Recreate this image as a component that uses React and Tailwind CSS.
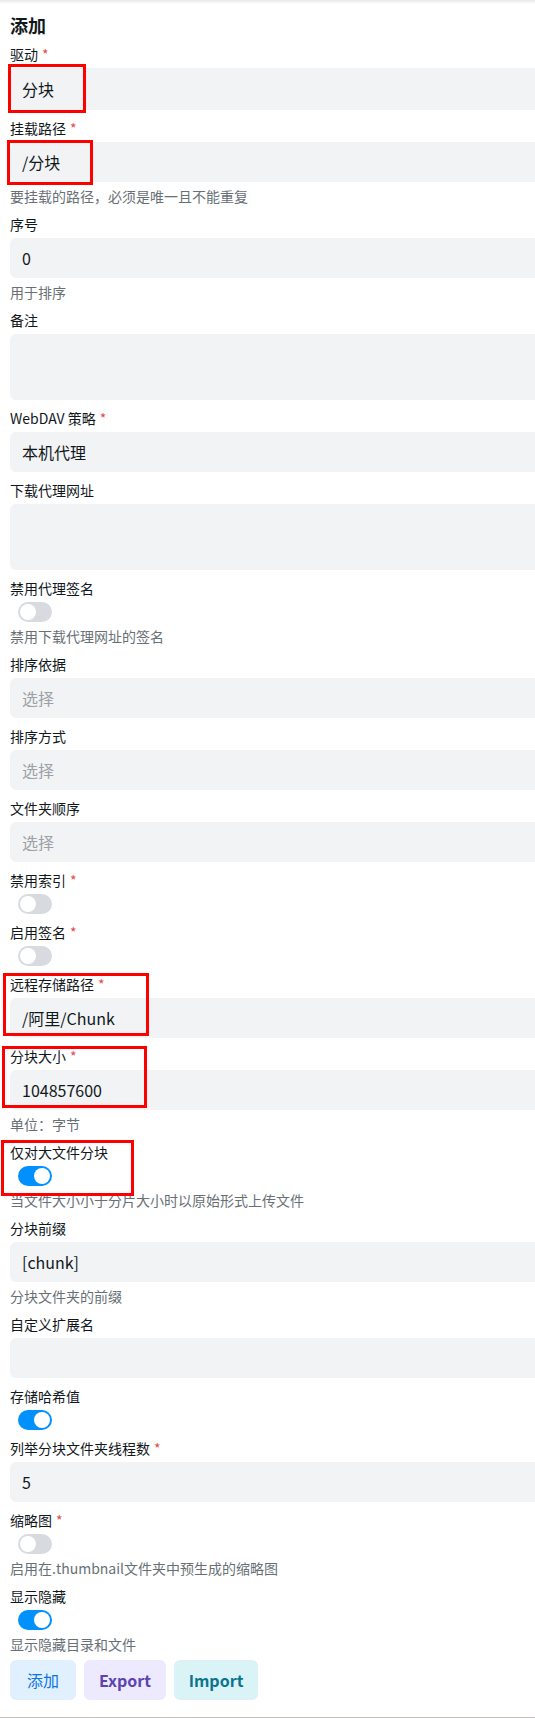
import { useState } from 'react'

const fields = [
  { label: '驱动', required: true, type: 'select', value: '分块', tall: true },
  { label: '挂载路径', required: true, type: 'input', value: '/分块', help: '要挂载的路径，必须是唯一且不能重复' },
  { label: '序号', type: 'input', value: '0', help: '用于排序' },
  { label: '备注', type: 'textarea' },
  { label: 'WebDAV 策略', required: true, type: 'select', value: '本机代理' },
  { label: '下载代理网址', type: 'textarea' },
  { label: '禁用代理签名', type: 'switch', on: false, help: '禁用下载代理网址的签名' },
  { label: '排序依据', type: 'select' },
  { label: '排序方式', type: 'select' },
  { label: '文件夹顺序', type: 'select' },
  { label: '禁用索引', required: true, type: 'switch', on: false },
  { label: '启用签名', required: true, type: 'switch', on: false },
  { label: '远程存储路径', required: true, type: 'input', value: '/阿里/Chunk' },
  { label: '分块大小', required: true, type: 'input', value: '104857600', help: '单位：字节' },
  { label: '仅对大文件分块', type: 'switch', on: true, help: '当文件大小小于分片大小时以原始形式上传文件' },
  { label: '分块前缀', type: 'input', value: '[chunk]', help: '分块文件夹的前缀' },
  { label: '自定义扩展名', type: 'input', value: '' },
  { label: '存储哈希值', type: 'switch', on: true },
  { label: '列举分块文件夹线程数', required: true, type: 'input', value: '5' },
  { label: '缩略图', required: true, type: 'switch', on: false, help: '启用在.thumbnail文件夹中预生成的缩略图' },
  { label: '显示隐藏', type: 'switch', on: true, help: '显示隐藏目录和文件' },
]

// red annotation boxes drawn over the form
const marks = [
  'left-[8px] top-[64px] w-[78px] h-[49px]',
  'left-[7px] top-[140px] w-[86px] h-[45px]',
  'left-[3px] top-[973px] w-[146px] h-[63px]',
  'left-[2px] top-[1046px] w-[145px] h-[62px]',
  'left-[1px] top-[1140px] w-[133px] h-[56px]',
]

function Switch({ on }) {
  const [checked, setChecked] = useState(on)
  return (
    <button
      onClick={() => setChecked(!checked)}
      className={`ml-2 w-[34px] h-5 rounded-full p-[2px] flex items-center ${
        checked ? 'bg-[#0091ff] justify-end' : 'bg-[#d7dbdf] justify-start'
      }`}
    >
      <span className="w-4 h-4 rounded-full bg-white" />
    </button>
  )
}

function Control({ field }) {
  if (field.type === 'switch') return <Switch on={field.on} />
  if (field.type === 'textarea') {
    return <textarea className="block w-full h-[66px] resize-none rounded-md bg-[#f1f3f5] px-3 py-2 text-base outline-none" />
  }
  if (field.type === 'select') {
    return (
      <div className={`w-full ${field.tall ? 'h-[42px]' : 'h-10'} rounded-md bg-[#f1f3f5] px-3 flex items-center text-base`}>
        {field.value ? (
          <span className="text-[#11181c]">{field.value}</span>
        ) : (
          <span className="text-[#9ba1a6]">选择</span>
        )}
      </div>
    )
  }
  return (
    <input
      readOnly
      value={field.value}
      className="block w-full h-10 rounded-md bg-[#f1f3f5] px-3 text-base text-[#11181c] outline-none"
    />
  )
}

export default function App() {
  return (
    <div className="relative w-[535px] h-[1718px] overflow-hidden bg-white border-b border-[#c6c1c1] font-['Noto_Sans_CJK_SC',sans-serif]">
      <div className="absolute top-0 left-0 w-full h-1 bg-linear-to-b from-[#e9e9e9] to-white" />

      <div className="w-[700px] pl-[10px] pt-[11px]">
        <h2 className="h-7 leading-7 text-lg font-bold text-[#11181c]">添加</h2>

        <div className="mt-[5px] flex flex-col gap-2">
          {fields.map((f) => (
            <div key={f.label} className="flex flex-col">
              <label className="h-5 leading-5 text-sm text-[#11181c]">
                {f.label}
                {f.required && <span className="ml-1 text-[#e5484d]">*</span>}
              </label>
              <div className="mt-1">
                <Control field={f} />
              </div>
              {f.help && <p className="mt-1 h-5 leading-5 text-sm text-[#687076]">{f.help}</p>}
            </div>
          ))}
        </div>

        <div className="mt-[6px] flex gap-2">
          <button className="w-[66px] h-10 rounded-md bg-[#e1f0ff] text-[#0b75e0] text-base">添加</button>
          <button className="w-[82px] h-10 rounded-md bg-[#ede9fe] text-[#5b44b2] text-base font-semibold">Export</button>
          <button className="w-[84px] h-10 rounded-md bg-[#d9f3f6] text-[#0d7490] text-base font-semibold">Import</button>
        </div>
      </div>

      {marks.map((m) => (
        <div key={m} className={`absolute ${m} border-[3px] border-[#ff0000] pointer-events-none`} />
      ))}
    </div>
  )
}
